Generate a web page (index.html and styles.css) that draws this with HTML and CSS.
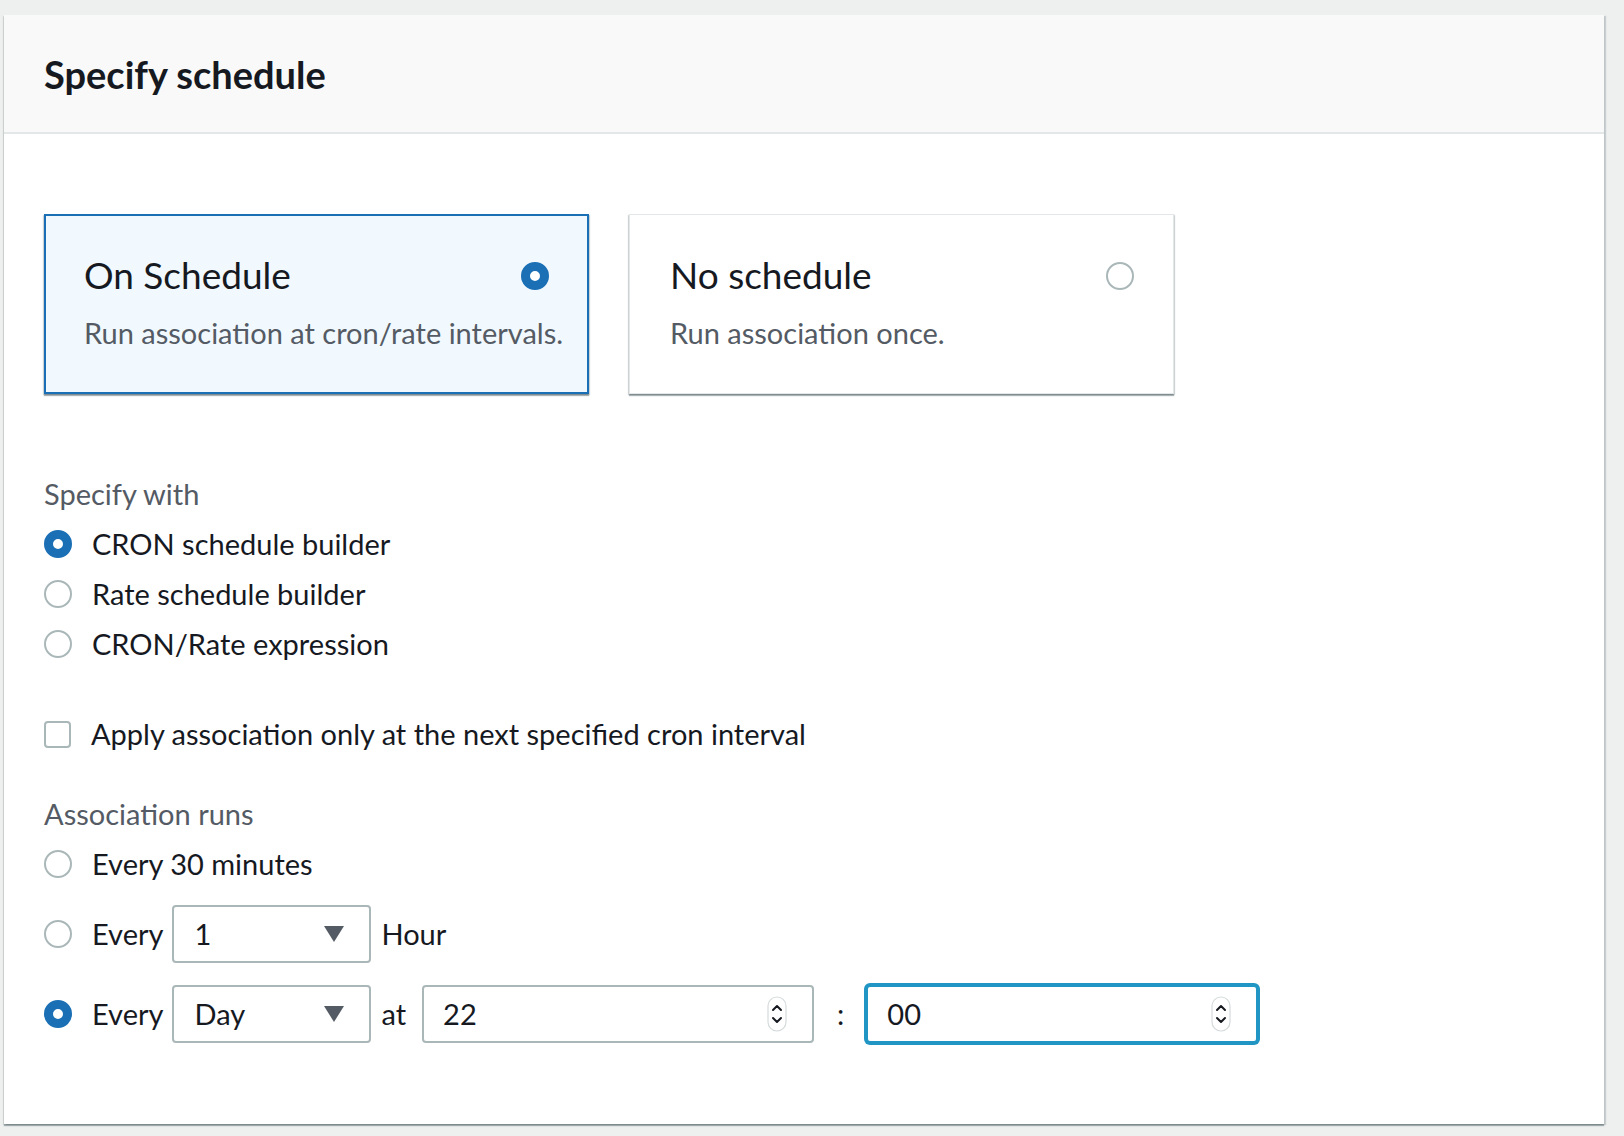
FILE: index.html
```html
<!DOCTYPE html>
<html lang="en">
<head>
<meta charset="utf-8">
<title>Specify schedule</title>
<link rel="stylesheet" href="styles.css">
</head>
<body>
<div class="page">
  <section class="container">
    <header class="container-header">
      <h2 class="container-title">Specify schedule</h2>
    </header>
    <div class="container-body">
      <div class="tiles">
        <div class="tile tile-selected">
          <div class="tile-head">
            <span class="tile-title">On Schedule</span>
            <span class="radio radio-checked"></span>
          </div>
          <div class="tile-desc">Run association at cron/rate intervals.</div>
        </div>
        <div class="tile">
          <div class="tile-head">
            <span class="tile-title">No schedule</span>
            <span class="radio"></span>
          </div>
          <div class="tile-desc">Run association once.</div>
        </div>
      </div>

      <div class="field-label label-first">Specify with</div>
      <div class="option-row"><span class="radio radio-checked"></span><span class="option-text">CRON schedule builder</span></div>
      <div class="option-row"><span class="radio"></span><span class="option-text">Rate schedule builder</span></div>
      <div class="option-row"><span class="radio"></span><span class="option-text">CRON/Rate expression</span></div>

      <div class="option-row checkbox-row"><span class="checkbox"></span><span class="option-text">Apply association only at the next specified cron interval</span></div>

      <div class="field-label label-runs">Association runs</div>
      <div class="option-row"><span class="radio"></span><span class="option-text">Every 30 minutes</span></div>

      <div class="run-row run-row-hour">
        <span class="radio"></span>
        <span class="option-text every">Every</span>
        <div class="select"><span class="select-value">1</span><span class="select-arrow"></span></div>
        <span class="option-text after-select">Hour</span>
      </div>

      <div class="run-row run-row-day">
        <span class="radio radio-checked"></span>
        <span class="option-text every">Every</span>
        <div class="select"><span class="select-value">Day</span><span class="select-arrow"></span></div>
        <span class="option-text after-select at">at</span>
        <div class="num-input"><span class="num-value">22</span><span class="spinner"><svg width="20" height="36" viewBox="0 0 20 36"><rect x="1" y="1" width="18" height="34" rx="9" fill="#fff" stroke="#d5dbdb" stroke-width="1.2"/><path d="M6 14 L10 10 L14 14" fill="none" stroke="#16191f" stroke-width="2" stroke-linecap="round" stroke-linejoin="round"/><path d="M6 22 L10 26 L14 22" fill="none" stroke="#16191f" stroke-width="2" stroke-linecap="round" stroke-linejoin="round"/></svg></span></div>
        <span class="option-text colon">:</span>
        <div class="num-input num-input-focused"><span class="num-value">00</span><span class="spinner"><svg width="20" height="36" viewBox="0 0 20 36"><rect x="1" y="1" width="18" height="34" rx="9" fill="#fff" stroke="#d5dbdb" stroke-width="1.2"/><path d="M6 14 L10 10 L14 14" fill="none" stroke="#16191f" stroke-width="2" stroke-linecap="round" stroke-linejoin="round"/><path d="M6 22 L10 26 L14 22" fill="none" stroke="#16191f" stroke-width="2" stroke-linecap="round" stroke-linejoin="round"/></svg></span></div>
      </div>
    </div>
  </section>
</div>
</body>
</html>
```
FILE: styles.css
```css
* { box-sizing: border-box; }
html, body { margin: 0; padding: 0; }
body {
  background: #eef0f0;
  font-family: Lato, "Liberation Sans", sans-serif;
  color: #16191f;
  width: 1624px;
  height: 1136px;
  overflow: hidden;
}
.page {
  padding: 15px 0 0 4px;
}
.container {
  width: 1600px;
  background: #fff;
  box-shadow: 0 2px 1px 0 rgba(0, 28, 36, 0.3), 2px 1px 1px 0 rgba(0, 28, 36, 0.15), -1px 1px 1px 0 rgba(0, 28, 36, 0.1);
}
.container-header {
  height: 119px;
  background: #f9f9f9;
  border-bottom: 2px solid #e4e7e7;
  padding-left: 40px;
  display: flex;
  align-items: center;
}
.container-title {
  margin: 0;
  font-size: 38px;
  font-weight: 700;
  line-height: 44px;
}
.container-body {
  padding: 80px 40px 81px 40px;
}
.tiles {
  display: flex;
  gap: 40px;
}
.tile {
  width: 545px;
  height: 180px;
  border: 1px solid #e4e7e7;
  background: #fff;
  padding: 39px 39px 0 40px;
  box-shadow: 0 2px 1px 0 rgba(0, 28, 36, 0.3), 1px 1px 1px 0 rgba(0, 28, 36, 0.15), -1px 1px 1px 0 rgba(0, 28, 36, 0.15);
}
.tile-selected {
  border: 2px solid #1a6fb5;
  background: #f1f8fe;
  padding: 38px 38px 0 38px;
}
.tile-head {
  display: flex;
  justify-content: space-between;
  align-items: center;
  height: 44px;
}
.tile-title {
  font-size: 37px;
  line-height: 44px;
  margin-top: -2px;
}
.tile-desc {
  margin-top: 17px;
  font-size: 29px;
  line-height: 36px;
  color: #545b64;
  white-space: nowrap;
}
.radio {
  flex: none;
  width: 28px;
  height: 28px;
  border-radius: 50%;
  border: 2px solid #aab7b8;
  background: #fff;
}
.radio-checked {
  border: 9px solid #1a6fb5;
}
.field-label {
  font-size: 29px;
  line-height: 40px;
  height: 40px;
  color: #545b64;
}
.label-first { margin-top: 80px; margin-bottom: 5px; }
.label-runs { margin-top: 35px; margin-bottom: 5px; }
.option-row {
  display: flex;
  align-items: center;
  height: 50px;
}
.option-text {
  font-size: 29px;
  line-height: 36px;
  white-space: nowrap;
}
.option-row .option-text { margin-left: 20px; }
.checkbox-row { margin-top: 40px; }
.checkbox {
  flex: none;
  width: 27px;
  height: 27px;
  border: 2px solid #aab7b8;
  border-radius: 4px;
  background: #fff;
}
.run-row {
  display: flex;
  align-items: center;
  height: 58px;
}
.run-row-hour { margin-top: 16px; }
.run-row-day { margin-top: 22px; }
.every { margin-left: 20px; margin-right: 9px; }
.after-select { margin-left: 10px; }
.at { margin-right: 16px; }
.select {
  position: relative;
  width: 199px;
  height: 58px;
  border: 2px solid #aab7b8;
  border-radius: 4px;
  background: #fff;
  display: flex;
  align-items: center;
  padding-left: 20px;
}
.select-value {
  font-size: 29px;
  line-height: 36px;
}
.select-arrow {
  position: absolute;
  right: 25px;
  top: 19px;
  width: 0;
  height: 0;
  border-left: 10px solid transparent;
  border-right: 10px solid transparent;
  border-top: 16px solid #545b64;
}
.num-input {
  position: relative;
  width: 392px;
  height: 58px;
  border: 2px solid #aab7b8;
  border-radius: 4px;
  background: #fff;
  display: flex;
  align-items: center;
  justify-content: space-between;
  padding: 0 25px 0 19px;
}
.num-input-focused {
  border-color: #2196c4;
  box-shadow: 0 0 0 2px #2196c4;
}
.num-value {
  font-size: 29px;
  line-height: 36px;
}
.spinner {
  display: flex;
  align-items: center;
}
.colon {
  margin: 0 22px 0 23px;
}
```
